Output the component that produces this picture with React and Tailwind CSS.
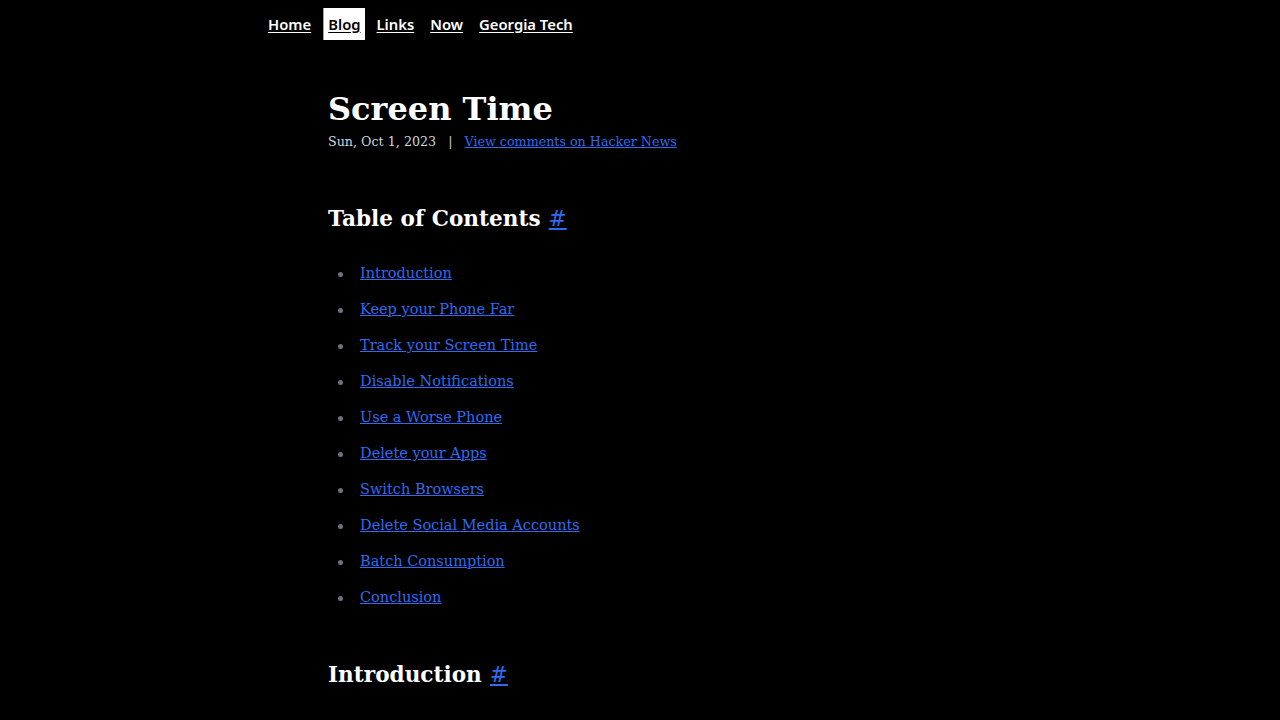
const toc = [
  "Introduction",
  "Keep your Phone Far",
  "Track your Screen Time",
  "Disable Notifications",
  "Use a Worse Phone",
  "Delete your Apps",
  "Switch Browsers",
  "Delete Social Media Accounts",
  "Batch Consumption",
  "Conclusion",
];

const nav = ["Home", "Blog", "Links", "Now", "Georgia Tech"];

export default function App() {
  return (
    <div className="min-h-screen bg-black text-white font-['DejaVu_Serif',serif]">
      <nav className="flex items-center gap-2 pl-[264px] pt-2 font-['Noto_Sans',sans-serif] text-[14.8px] font-semibold">
        {nav.map((n) => (
          <a
            key={n}
            href="#"
            className={
              "underline underline-offset-2 px-1 h-8 flex items-center " +
              (n === "Blog" ? "bg-white text-black border-l border-gray-400" : "text-white")
            }
          >
            {n}
          </a>
        ))}
      </nav>

      <main className="ml-[328px] mt-[46px] w-[620px]">
        <h1 className="text-[32px] font-bold leading-[46px]">Screen Time</h1>
        <div className="flex items-center h-5 text-[12.7px] text-gray-300">
          <span>Sun, Oct 1, 2023</span>
          <span className="mx-3">|</span>
          <a href="#" className="text-[#2f6bf0] underline">View comments on Hacker News</a>
        </div>

        <h2 className="mt-[51px] text-[21.6px] font-bold leading-8 flex items-center">
          Table of Contents
          <a href="#" className="ml-2 text-[#2f6bf0] font-normal underline">#</a>
        </h2>

        <ul className="mt-[21px] text-[14.5px]">
          {toc.map((t) => (
            <li key={t} className="h-9 flex items-center">
              <span className="ml-[10px] mr-[17px] w-[5px] h-[5px] rounded-full bg-gray-500" />
              <a href="#" className="text-[#2f6bf0] underline">{t}</a>
            </li>
          ))}
        </ul>

        <h2 className="mt-[43px] text-[21.6px] font-bold leading-8 flex items-center">
          Introduction
          <a href="#" className="ml-2 text-[#2f6bf0] font-normal underline">#</a>
        </h2>
      </main>
    </div>
  );
}
